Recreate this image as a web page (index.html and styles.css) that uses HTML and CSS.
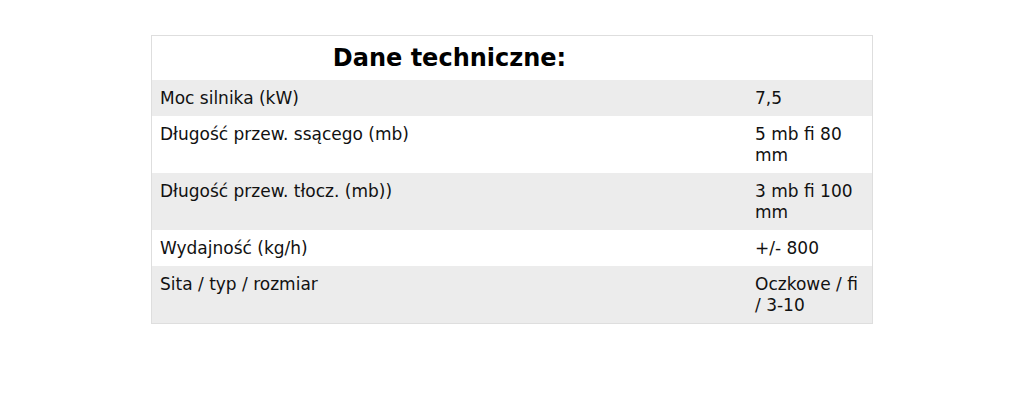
FILE: index.html
```html
<!DOCTYPE html>
<html lang="pl">
<head>
<meta charset="utf-8">
<link rel="stylesheet" href="styles.css">
</head>
<body>
<table class="spec">
  <tr class="head"><th class="title">Dane techniczne:</th><th class="empty"></th></tr>
  <tr class="odd"><td class="name">Moc silnika (kW)</td><td class="val">7,5</td></tr>
  <tr><td class="name">Długość przew. ssącego (mb)</td><td class="val">5 mb fi 80 mm</td></tr>
  <tr class="odd"><td class="name">Długość przew. tłocz. (mb))</td><td class="val">3 mb fi 100 mm</td></tr>
  <tr><td class="name">Wydajność (kg/h)</td><td class="val">+/- 800</td></tr>
  <tr class="odd"><td class="name">Sita / typ / rozmiar</td><td class="val">Oczkowe / fi / 3-10</td></tr>
</table>
</body>
</html>
```
FILE: styles.css
```css
html, body {
  margin: 0;
  padding: 0;
  background: #ffffff;
}
body {
  font-family: "DejaVu Sans", sans-serif;
  color: #111111;
  padding-top: 35px;
}
.spec {
  width: 722px;
  margin: 0 auto;
  border-collapse: collapse;
  border: 1px solid #dedede;
  font-size: 17px;
  line-height: 21px;
}
.spec th {
  height: 44px;
  padding: 0;
  box-sizing: border-box;
  font-size: 24px;
  line-height: 28px;
  font-weight: bold;
  color: #000;
  text-align: center;
  vertical-align: middle;
}
.spec td {
  padding: 8px 8px 7px 8px;
  vertical-align: top;
  text-align: left;
}
.spec .val {
  width: 109px;
}
.odd {
  background: #ececec;
}
```
